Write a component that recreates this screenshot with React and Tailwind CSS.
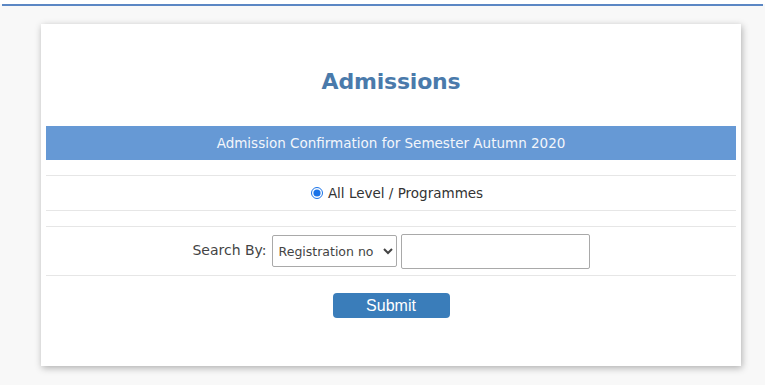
export default function App() {
  return (
    <div className="w-[765px] h-[385px] bg-[#f8f8f8] overflow-hidden" style={{ fontFamily: '"DejaVu Sans", Verdana, sans-serif' }}>
      <div className="h-[4px] bg-white" />
      <div className="h-[2px] bg-[#5b87c4] mx-[2px]" />
      <div className="ml-[41px] mt-[18px] w-[700px] h-[342px] bg-white shadow-[1px_2px_7px_rgba(0,0,0,0.3)] px-[5px]">
        <div className="h-[102px] pt-[12px] flex items-center justify-center">
          <h1 className="text-[22px] font-bold text-[#4a7aab] tracking-[-0.2px]">Admissions</h1>
        </div>
        <div className="h-[34px] bg-[#6699d5] flex items-center justify-center text-[13.5px] text-[#f3f6fb]">
          Admission Confirmation for Semester Autumn 2020
        </div>
        <div className="h-[15px]" />
        <div className="border-t border-b border-[#e6e6e6] h-[36px] flex items-center justify-center gap-[5px] text-[13.5px] text-[#333]">
          <input type="radio" checked readOnly className="ml-[12px] w-[12px] h-[12px] m-0 accent-[#1a73e8]" />
          <span>All Level / Programmes</span>
        </div>
        <div className="h-[15px]" />
        <div className="border-t border-b border-[#e6e6e6] h-[50px] flex items-center justify-center text-[14px] text-[#444]">
          <span className="mr-[5px] mt-[-1px]">Search By:</span>
          <select className="w-[125px] h-[32px] border border-[#a9a9a9] rounded-[2px] text-[12.5px] text-[#444] px-[2px] bg-white">
            <option>Registration no</option>
          </select>
          <input type="text" className="ml-[4px] w-[189px] h-[35px] border border-[#a9a9a9] rounded-[2px] bg-white" />
        </div>
        <div className="flex justify-center pt-[17px]">
          <button className="w-[117px] h-[25px] bg-[#3a7dba] rounded-[4px] text-white text-[16px] leading-none" style={{ fontFamily: '"Liberation Sans", Arial, sans-serif' }}>
            Submit
          </button>
        </div>
      </div>
    </div>
  );
}
